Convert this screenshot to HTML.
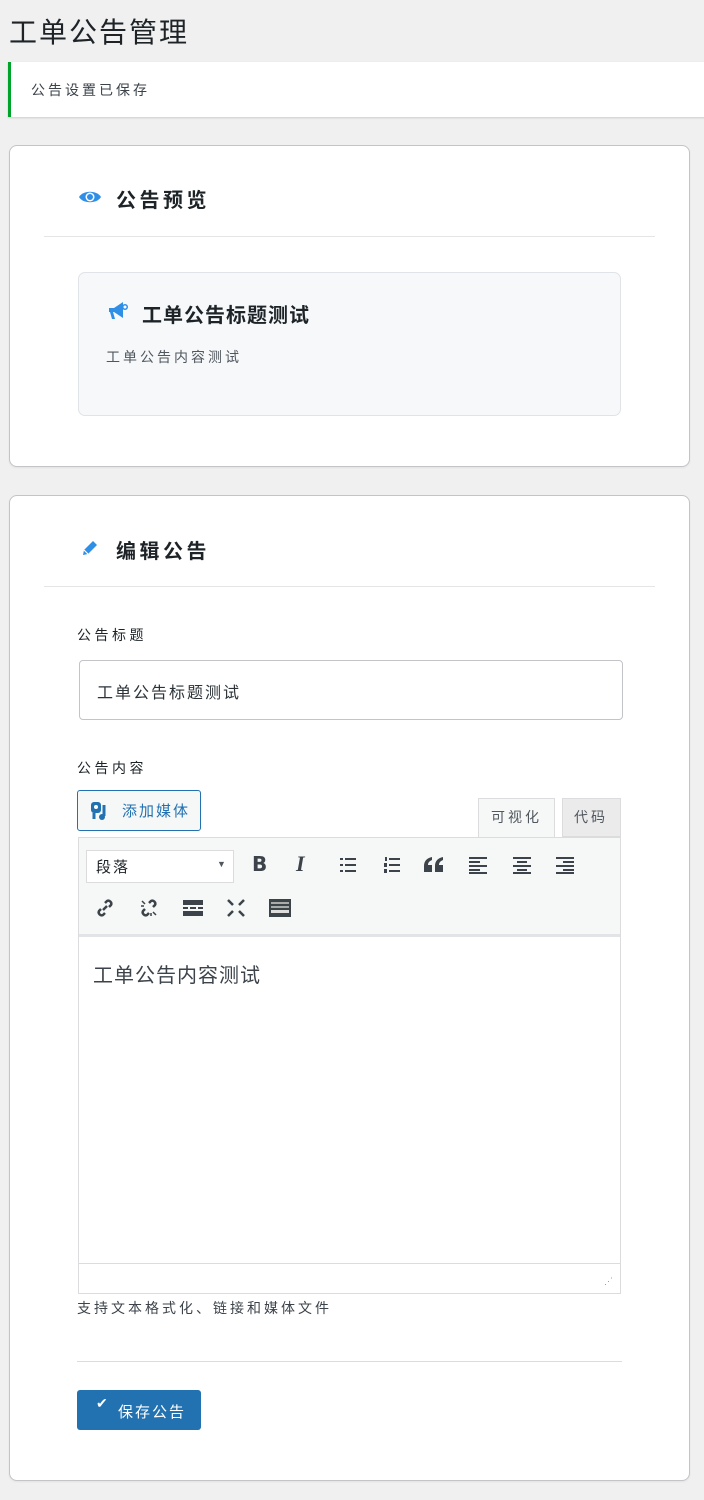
<!DOCTYPE html>
<html><head><meta charset="utf-8"><style>
*{box-sizing:border-box;margin:0;padding:0}
body{width:704px;height:1500px;background:#f0f0f1;font-family:"Liberation Sans","Noto Sans CJK SC",sans-serif;color:#1d2327;position:relative;overflow:hidden}
.a{position:absolute;white-space:nowrap}
.card{position:absolute;left:9px;width:681px;background:#fff;border:1px solid #c3c4c7;border-radius:8px;box-shadow:0 1px 2px rgba(0,0,0,.06)}
.h{font-size:20px;font-weight:bold;color:#1d2327;letter-spacing:3.5px}
.tb{position:absolute;font-size:18px;color:#3c434a;font-weight:bold}
</style></head><body>
<div class="a" style="left:9px;top:11px;font-size:28px;color:#1d2327;letter-spacing:2px">工单公告管理</div>
<div class="a" style="left:8px;top:62px;width:700px;height:55px;background:#fff;border-left:3px solid #00a32a;box-shadow:0 1px 2px rgba(0,0,0,.15)"></div>
<div class="a" style="left:31px;top:80px;font-size:14px;color:#3c434a;letter-spacing:3px">公告设置已保存</div>

<div class="card" style="top:145px;height:322px"></div>
<svg class="a" style="left:78px;top:188px" width="24" height="18" viewBox="0 0 24 18"><path d="M1 9C5 2 19 2 23 9C19 16 5 16 1 9Z" fill="#2f8fe6"/><circle cx="12" cy="9" r="4.5" fill="#fff"/><circle cx="12" cy="9" r="3" fill="#2f8fe6"/></svg>
<div class="a h" style="left:116px;top:184px">公告预览</div>
<div class="a" style="left:44px;top:236px;width:611px;height:1px;background:#e5e5e5"></div>
<div class="a" style="left:78px;top:272px;width:543px;height:144px;background:#f6f8fa;border:1px solid #e0e3e7;border-radius:7px"></div>
<svg class="a" style="left:107px;top:299px" width="24" height="24" viewBox="0 0 24 24"><path d="M2 9h5l9-6v16l-9-6H6l2 7H5l-2-7H2z" fill="#2f8fe6"/><circle cx="18" cy="8" r="3" fill="#2f8fe6"/><circle cx="18" cy="8" r="1.5" fill="#fff"/></svg>
<div class="a h" style="left:142px;top:299px;letter-spacing:1px">工单公告标题测试</div>
<div class="a" style="left:106px;top:347px;font-size:14px;color:#50575e;letter-spacing:3px">工单公告内容测试</div>

<div class="card" style="top:495px;height:986px"></div>
<svg class="a" style="left:80px;top:538px" width="20" height="20" viewBox="0 0 20 20"><path d="M3 17l1-5 9-9 4 4-9 9z" fill="#2f8fe6"/><path d="M4 12l4 4" stroke="#fff" stroke-width="1.2"/></svg>
<div class="a h" style="left:116px;top:535px">编辑公告</div>
<div class="a" style="left:44px;top:586px;width:611px;height:1px;background:#e5e5e5"></div>
<div class="a" style="left:77px;top:625px;font-size:14px;color:#1d2327;letter-spacing:3.5px">公告标题</div>
<div class="a" style="left:79px;top:660px;width:544px;height:60px;border:1px solid #c3c4c7;border-radius:4px;background:#fff"></div>
<div class="a" style="left:97px;top:679px;font-size:16px;color:#2c3338;letter-spacing:2px">工单公告标题测试</div>
<div class="a" style="left:77px;top:758px;font-size:14px;color:#1d2327;letter-spacing:3.5px">公告内容</div>
<div class="a" style="left:77px;top:790px;width:124px;height:41px;border:1px solid #2271b1;border-radius:3px;background:#f6f7f7"></div>
<svg class="a" style="left:90px;top:801px" width="22" height="20" viewBox="0 0 22 20"><rect x="1" y="1" width="10" height="11" rx="3" fill="#2271b1"/><circle cx="6" cy="6" r="2" fill="#fff"/><path d="M14 4v11" stroke="#2271b1" stroke-width="3"/><circle cx="12" cy="16" r="3" fill="#2271b1"/><path d="M4 12v6" stroke="#2271b1" stroke-width="3"/></svg>
<div class="a" style="left:122px;top:800px;font-size:15px;color:#2271b1;letter-spacing:2px">添加媒体</div>
<div class="a" style="left:478px;top:798px;width:77px;height:41px;background:#f6f7f7;border:1px solid #dcdcde;border-bottom:none"></div>
<div class="a" style="left:491px;top:807px;font-size:14px;color:#50575e;letter-spacing:3px">可视化</div>
<div class="a" style="left:562px;top:798px;width:59px;height:39px;background:#ebebeb;border:1px solid #dcdcde"></div>
<div class="a" style="left:574px;top:807px;font-size:14px;color:#50575e;letter-spacing:3px">代码</div>
<div class="a" style="left:78px;top:837px;width:543px;height:457px;border:1px solid #dcdcde;background:#f6f7f7"></div>
<div class="a" style="left:86px;top:850px;width:148px;height:33px;background:#fff;border:1px solid #dcdcde"></div>
<div class="a" style="left:96px;top:856px;font-size:15px;color:#1d2327;letter-spacing:2px">段落</div>
<div class="a" style="left:217px;top:859px;font-size:9px;color:#50575e">▼</div>
<div class="tb" style="left:252px;top:852px;font-family:'DejaVu Sans',sans-serif;font-size:20px">B</div>
<div class="tb" style="left:296px;top:851px;font-family:'Liberation Serif',serif;font-style:italic;font-size:22px">I</div>
<svg class="a" style="left:338px;top:855px" width="20" height="20" viewBox="0 0 20 20" fill="#3c434a"><rect x="2" y="3" width="3" height="2"/><rect x="2" y="9" width="3" height="2"/><rect x="2" y="15" width="3" height="2"/><rect x="7" y="3" width="11" height="2"/><rect x="7" y="9" width="11" height="2"/><rect x="7" y="15" width="11" height="2"/></svg>
<svg class="a" style="left:382px;top:855px" width="20" height="20" viewBox="0 0 20 20" fill="#3c434a"><rect x="3" y="2" width="2" height="4"/><rect x="2" y="8" width="3" height="4"/><rect x="2" y="14" width="3" height="4"/><rect x="7" y="3" width="11" height="2"/><rect x="7" y="9" width="11" height="2"/><rect x="7" y="15" width="11" height="2"/></svg>
<svg class="a" style="left:423px;top:856px" width="22" height="18" viewBox="0 0 22 18" fill="#3c434a"><path d="M1 16v-6c0-5 3-8 8-9v3c-2 1-4 2-4 5h4v7z"/><path d="M12 16v-6c0-5 3-8 8-9v3c-2 1-4 2-4 5h4v7z"/></svg>
<svg class="a" style="left:468px;top:855px" width="20" height="20" viewBox="0 0 20 20" fill="#3c434a"><rect x="1" y="2" width="18" height="2"/><rect x="1" y="6" width="11" height="2"/><rect x="1" y="10" width="18" height="2"/><rect x="1" y="14" width="11" height="2"/><rect x="1" y="17" width="18" height="2"/></svg>
<svg class="a" style="left:512px;top:855px" width="20" height="20" viewBox="0 0 20 20" fill="#3c434a"><rect x="1" y="2" width="18" height="2"/><rect x="5" y="6" width="10" height="2"/><rect x="1" y="10" width="18" height="2"/><rect x="5" y="14" width="10" height="2"/><rect x="1" y="17" width="18" height="2"/></svg>
<svg class="a" style="left:555px;top:855px" width="20" height="20" viewBox="0 0 20 20" fill="#3c434a"><rect x="1" y="2" width="18" height="2"/><rect x="8" y="6" width="11" height="2"/><rect x="1" y="10" width="18" height="2"/><rect x="8" y="14" width="11" height="2"/><rect x="1" y="17" width="18" height="2"/></svg>
<svg class="a" style="left:94px;top:897px" width="22" height="22" viewBox="0 0 22 22" fill="none" stroke="#3c434a" stroke-width="2.5"><path d="M9 13l4-4"/><path d="M11 6l2-2a3 3 0 014 4l-2 2"/><path d="M11 16l-2 2a3 3 0 01-4-4l2-2"/></svg>
<svg class="a" style="left:138px;top:897px" width="22" height="22" viewBox="0 0 22 22" fill="none" stroke="#3c434a" stroke-width="2.5"><path d="M11 6l2-2a3 3 0 014 4l-2 2"/><path d="M11 16l-2 2a3 3 0 01-4-4l2-2"/><path d="M4 4l3 3M18 18l-3-3M3 9h3M13 19v-3" stroke-width="1.5"/></svg>
<svg class="a" style="left:182px;top:897px" width="22" height="22" viewBox="0 0 22 22" fill="#3c434a"><rect x="1" y="3" width="20" height="5"/><rect x="1" y="10" width="5" height="2"/><rect x="8" y="10" width="6" height="2"/><rect x="16" y="10" width="5" height="2"/><rect x="1" y="14" width="20" height="5"/></svg>
<svg class="a" style="left:225px;top:897px" width="22" height="22" viewBox="0 0 22 22" fill="none" stroke="#3c434a" stroke-width="2.5"><path d="M3 3l5 5M19 3l-5 5M3 19l5-5M19 19l-5-5"/></svg>
<svg class="a" style="left:268px;top:897px" width="24" height="22" viewBox="0 0 24 22" fill="#3c434a"><rect x="1" y="2" width="22" height="18"/><rect x="3" y="5" width="18" height="2" fill="#aaa"/><rect x="3" y="9" width="18" height="2" fill="#aaa"/><rect x="3" y="13" width="18" height="3" fill="#ddd"/></svg>
<div class="a" style="left:79px;top:934px;width:541px;height:3px;background:#e2e4e7"></div>
<div class="a" style="left:79px;top:937px;width:541px;height:326px;background:#fff"></div>
<div class="a" style="left:93px;top:959px;font-size:20px;color:#3c434a;letter-spacing:1px">工单公告内容测试</div>
<div class="a" style="left:79px;top:1263px;width:541px;height:30px;background:#fff;border-top:1px solid #dcdcde"></div>
<div class="a" style="left:604px;top:1276px;font-size:9px;color:#999">⋰</div>
<div class="a" style="left:77px;top:1298px;font-size:14px;color:#3c434a;letter-spacing:3px">支持文本格式化、链接和媒体文件</div>
<div class="a" style="left:77px;top:1361px;width:545px;height:1px;background:#dcdcde"></div>
<div class="a" style="left:77px;top:1390px;width:124px;height:40px;background:#2271b1;border-radius:3px"></div>
<div class="a" style="left:96px;top:1395px;font-size:14px;color:#fff">✔</div>
<div class="a" style="left:118px;top:1401px;font-size:15px;color:#fff;letter-spacing:2px">保存公告</div>
</body></html>
